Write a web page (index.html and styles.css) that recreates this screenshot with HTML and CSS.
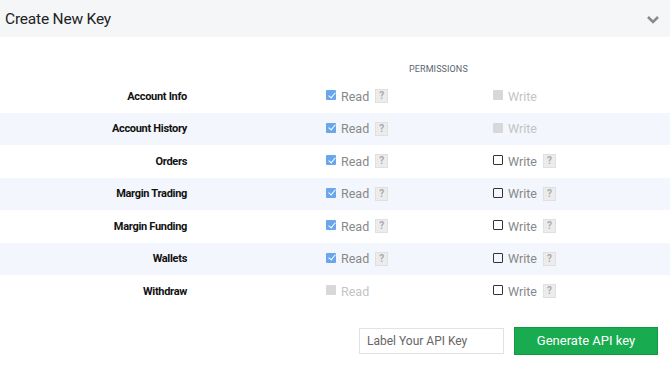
FILE: index.html
```html
<!DOCTYPE html>
<html lang="en">
<head>
  <meta charset="UTF-8">
  <title>Create New Key</title>
  <link rel="stylesheet" href="styles.css">
</head>
<body>
  <div class="panel">
    <div class="panel-head">
      <h2>Create New Key</h2>
      <svg class="chevron" width="14" height="10" viewBox="0 0 14 10"><path d="M2 2 L7 7 L12 2" fill="none" stroke="#8a8a8a" stroke-width="2.6"/></svg>
    </div>

    <div class="perm-title">PERMISSIONS</div>

    <div class="perm-table">
      <div class="row">
        <div class="name">Account Info</div>
        <div class="cell"><span class="box checked"></span><span class="lbl">Read</span><span class="help">?</span></div>
        <div class="cell off"><span class="box disabled"></span><span class="lbl">Write</span></div>
      </div>
      <div class="row alt">
        <div class="name">Account History</div>
        <div class="cell"><span class="box checked"></span><span class="lbl">Read</span><span class="help">?</span></div>
        <div class="cell off"><span class="box disabled"></span><span class="lbl">Write</span></div>
      </div>
      <div class="row">
        <div class="name">Orders</div>
        <div class="cell"><span class="box checked"></span><span class="lbl">Read</span><span class="help">?</span></div>
        <div class="cell"><span class="box"></span><span class="lbl">Write</span><span class="help">?</span></div>
      </div>
      <div class="row alt">
        <div class="name">Margin Trading</div>
        <div class="cell"><span class="box checked"></span><span class="lbl">Read</span><span class="help">?</span></div>
        <div class="cell"><span class="box"></span><span class="lbl">Write</span><span class="help">?</span></div>
      </div>
      <div class="row">
        <div class="name">Margin Funding</div>
        <div class="cell"><span class="box checked"></span><span class="lbl">Read</span><span class="help">?</span></div>
        <div class="cell"><span class="box"></span><span class="lbl">Write</span><span class="help">?</span></div>
      </div>
      <div class="row alt">
        <div class="name">Wallets</div>
        <div class="cell"><span class="box checked"></span><span class="lbl">Read</span><span class="help">?</span></div>
        <div class="cell"><span class="box"></span><span class="lbl">Write</span><span class="help">?</span></div>
      </div>
      <div class="row">
        <div class="name">Withdraw</div>
        <div class="cell off"><span class="box disabled"></span><span class="lbl">Read</span></div>
        <div class="cell"><span class="box"></span><span class="lbl">Write</span><span class="help">?</span></div>
      </div>
    </div>

    <div class="actions">
      <input type="text" class="key-label" placeholder="Label Your API Key">
      <button class="generate">Generate API key</button>
    </div>
  </div>
</body>
</html>
```

FILE: styles.css
```css
html, body {
  margin: 0;
  padding: 0;
  background: white;
  font-family: Roboto, 'Liberation Sans', sans-serif;
}

.panel-head {
  height: 37px;
  background: #f5f6f8;
  display: flex;
  align-items: center;
  justify-content: space-between;
  padding: 0 10px 0 5px;
}

.panel-head h2 {
  margin: 0;
  font-size: 15.5px;
  font-weight: 400;
  color: #222;
  letter-spacing: -0.2px;
}

.chevron {
  margin-top: 2px;
}

.perm-title {
  padding: 27px 0 0 409px;
  height: 16px;
  font-size: 9px;
  color: #5d6573;
  letter-spacing: 0.1px;
}

.perm-table {
  display: flex;
  flex-direction: column;
}

.row {
  display: grid;
  grid-template-columns: 187px 306px 1fr;
  height: 32.5px;
  align-items: center;
}

.row.alt {
  background: #f3f6fc;
}

.name {
  text-align: right;
  font-size: 11px;
  font-weight: 700;
  color: #111;
  letter-spacing: -0.3px;
}

.row .cell:nth-child(2) {
  padding-left: 139px;
}

.cell {
  display: flex;
  align-items: center;
  font-size: 12.5px;
  color: #888;
}

.cell .lbl {
  margin-left: 5px;
}

.cell.off {
  color: #c4c4c4;
}

.box {
  flex: none;
  width: 10px;
  height: 10px;
  border: 1.5px solid #333;
  border-radius: 1px;
  box-sizing: border-box;
  display: inline-block;
  position: relative;
  top: -1px;
}

.box.disabled {
  border: none;
  background: #d8d8d8;
}

.box.checked {
  border: none;
  background: #6aa6ec;
}

.box.checked::after {
  content: '';
  position: absolute;
  left: 3.5px;
  top: 0.5px;
  width: 3px;
  height: 6px;
  border: solid white;
  border-width: 0 1.5px 1.5px 0;
  transform: rotate(40deg);
}

.help {
  margin-left: 6px;
  width: 13px;
  height: 14px;
  box-sizing: border-box;
  background: #ececec;
  border: 1px solid #e0e0e0;
  color: #aaa;
  font-size: 10px;
  font-weight: 700;
  text-align: center;
  line-height: 12px;
}

.actions {
  display: flex;
  justify-content: flex-end;
  align-items: center;
  gap: 10px;
  padding: 19px 12px 0 0;
}

.key-label {
  width: 145px;
  height: 26px;
  box-sizing: border-box;
  border: 1px solid #e2e2e2;
  padding: 0 7px;
  font-family: Roboto, 'Liberation Sans', sans-serif;
  font-size: 12px;
  outline: none;
}

.key-label::placeholder {
  color: #666;
}

.generate {
  width: 144px;
  height: 28px;
  background: #19ab4f;
  border: 1px solid #13983f;
  color: white;
  font-family: Roboto, 'Liberation Sans', sans-serif;
  font-size: 13px;
  cursor: pointer;
}
```
